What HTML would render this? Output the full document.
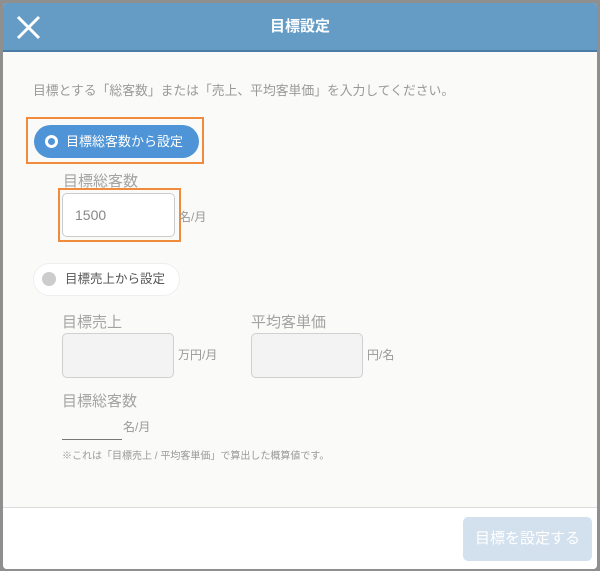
<!DOCTYPE html>
<html><head><meta charset="utf-8"><style>
*{box-sizing:border-box;margin:0;padding:0}
body{width:600px;height:571px;background:#8f8f8f;position:relative;overflow:hidden;font-family:"Liberation Sans","Noto Sans CJK JP",sans-serif}
.modal{position:absolute;left:3px;top:3px;width:594px;height:566px;background:#fafaf9;border-radius:4px;overflow:hidden}
.hdr{height:49px;background:#649cc6;border-bottom:2px solid #4a7ca3;position:relative;color:#fff;text-align:center;font-size:15px;line-height:47px;font-weight:bold}
.x{position:absolute;left:13px;top:12px}
.abs{position:absolute;line-height:1}
.desc{left:30px;top:82px;font-size:12.8px;color:#999}
.hl{border:2px solid #f08a3c}
.pill1{left:31px;top:122px;width:165px;height:33px;border-radius:17px;background:#4e94d6;color:#fff;font-size:13px;line-height:33px;padding-left:32px}
.pill1:before{content:"";position:absolute;left:11px;top:10px;width:13px;height:13px;border-radius:50%;border:3px solid #fff;box-sizing:border-box}
.pill2{left:30px;top:260px;width:147px;height:33px;border-radius:17px;background:#fff;border:1px solid #eee;color:#555;font-size:12.5px;line-height:31px;padding-left:31px}
.pill2:before{content:"";position:absolute;left:8px;top:8px;width:14px;height:14px;border-radius:50%;background:#ccc}
.lbl{font-size:15px;color:#a3a3a3}
.inp{border:1px solid #d0d0d0;border-radius:5px;background:#f3f3f3}
.unit{font-size:12px;color:#999}
.foot{position:absolute;left:0;top:504px;width:594px;height:62px;background:#fff;border-top:1px solid #ddd}
.btn{left:460px;top:514px;width:129px;height:44px;border-radius:5px;background:#d2e1ed;color:#fff;font-size:15px;line-height:44px;text-align:center}
</style></head><body>
<div class="modal">
<div class="hdr">目標設定
<svg class="x" width="25" height="25" viewBox="0 0 25 25"><path d="M2 2L23 23M23 2L2 23" stroke="#fff" stroke-width="3"/></svg></div>
<div class="abs desc">目標とする「総客数」または「売上、平均客単価」を入力してください。</div>
<div class="abs hl" style="left:23px;top:114px;width:178px;height:47px"></div>
<div class="abs pill1">目標総客数から設定</div>
<div class="abs lbl" style="left:60px;top:171px">目標総客数</div>
<div class="abs hl" style="left:55px;top:185px;width:123px;height:54px"></div>
<div class="abs" style="left:59px;top:190px;width:113px;height:44px;border:1px solid #ccc;border-radius:5px;background:#fff;font-size:14px;color:#888;line-height:42px;padding-left:12px">1500</div>
<div class="abs unit" style="left:176px;top:208px">名/月</div>
<div class="abs pill2">目標売上から設定</div>
<div class="abs lbl" style="left:59px;top:312px">目標売上</div>
<div class="abs inp" style="left:59px;top:330px;width:112px;height:45px"></div>
<div class="abs unit" style="left:175px;top:346px">万円/月</div>
<div class="abs lbl" style="left:248px;top:312px">平均客単価</div>
<div class="abs inp" style="left:248px;top:330px;width:112px;height:45px"></div>
<div class="abs unit" style="left:364px;top:346px">円/名</div>
<div class="abs lbl" style="left:59px;top:391px">目標総客数</div>
<div class="abs unit" style="left:120px;top:418px">名/月</div>
<div class="abs" style="left:59px;top:436px;width:60px;border-top:1px solid #777"></div>
<div class="abs" style="left:59px;top:449px;font-size:10px;color:#999">※これは「目標売上 / 平均客単価」で算出した概算値です。</div>
<div class="foot"></div>
<div class="abs btn">目標を設定する</div>
</div>
</body></html>
